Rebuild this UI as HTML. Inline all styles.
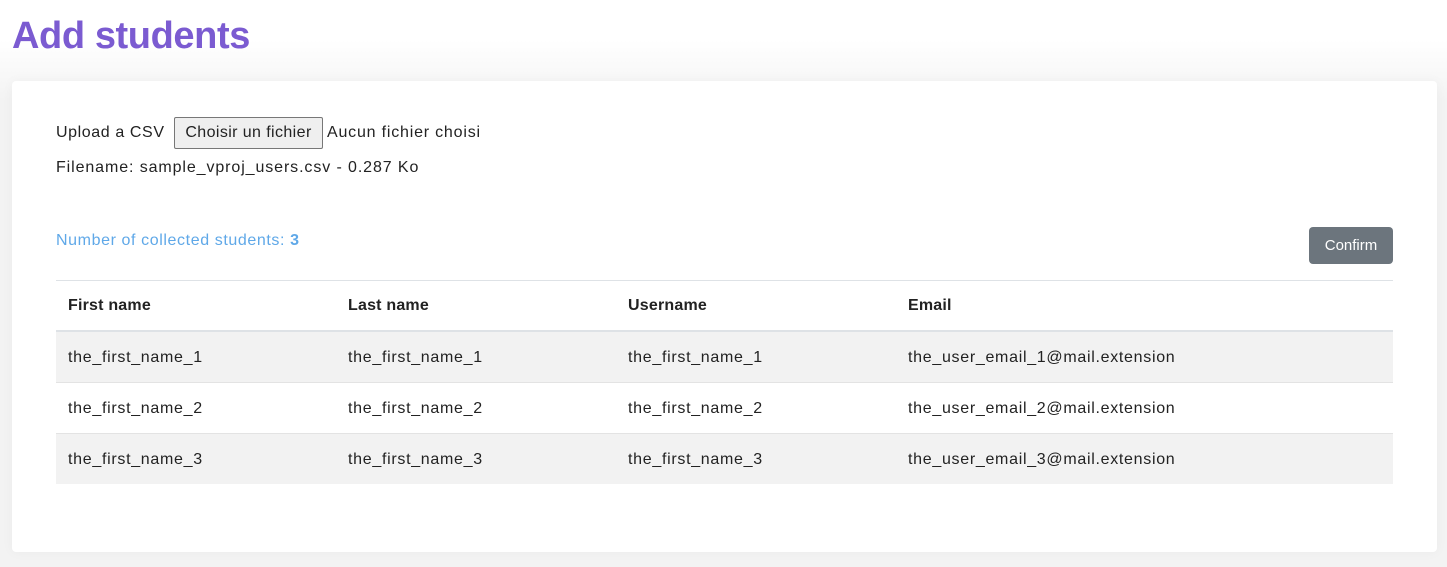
<!DOCTYPE html>
<html><head><style>
html,body{margin:0;padding:0;}
body{width:1447px;height:567px;background:linear-gradient(#fff 0,#fff 40px,#f3f3f3 100px);font-family:"Liberation Sans",sans-serif;color:#222;position:relative;overflow:hidden;}
h1{position:absolute;left:12px;top:13px;margin:0;font-size:38px;font-weight:bold;color:#7b5bd1;letter-spacing:-0.4px;line-height:46px;}
.card{position:absolute;left:12px;top:81px;width:1425px;height:471px;background:#fff;border-radius:4px;box-shadow:0 0 12px rgba(0,0,0,0.04);}
.t{position:absolute;font-size:16px;white-space:nowrap;letter-spacing:0.9px;}
.btnf{position:absolute;left:162px;top:36px;width:149px;height:32px;box-sizing:border-box;border:1px solid #777;border-radius:2px;background:#efefef;font-size:16px;line-height:30px;text-align:center;letter-spacing:0.4px;}
.conf{position:absolute;left:1297px;top:146px;width:84px;height:37px;background:#6c757d;border-radius:4px;color:#fff;font-size:15px;line-height:37px;text-align:center;}
table{position:absolute;left:44px;top:199px;width:1337px;border-collapse:collapse;font-size:16px;letter-spacing:0.7px;}
td,th{text-align:left;padding:0 12px;height:50px;line-height:16px;}
td{padding-top:2px;height:48px;}
th{font-weight:bold;border-top:1px solid #dee2e6;border-bottom:2px solid #dee2e6;height:49px;letter-spacing:0.2px;}
tr.s td{background:#f2f2f2;}
td{border-top:1px solid #e3e3e3;}
</style></head><body>
<h1>Add students</h1>
<div class="card">
<div class="t" style="left:44px;top:43px;letter-spacing:0.6px;">Upload a CSV</div>
<div class="btnf">Choisir un fichier</div>
<div class="t" style="left:315px;top:43px;letter-spacing:0.8px;">Aucun fichier choisi</div>
<div class="t" style="left:44px;top:78px;">Filename: sample_vproj_users.csv - 0.287 Ko</div>
<div class="t" style="left:44px;top:151px;color:#5fa8e8;letter-spacing:0.6px;">Number of collected students: <b>3</b></div>
<div class="conf">Confirm</div>
<table>
<tr><th style="width:256px">First name</th><th style="width:256px">Last name</th><th style="width:256px">Username</th><th>Email</th></tr>
<tr class="s"><td>the_first_name_1</td><td>the_first_name_1</td><td>the_first_name_1</td><td>the_user_email_1@mail.extension</td></tr>
<tr><td>the_first_name_2</td><td>the_first_name_2</td><td>the_first_name_2</td><td>the_user_email_2@mail.extension</td></tr>
<tr class="s"><td>the_first_name_3</td><td>the_first_name_3</td><td>the_first_name_3</td><td>the_user_email_3@mail.extension</td></tr>
</table>
</div>
</body></html>
